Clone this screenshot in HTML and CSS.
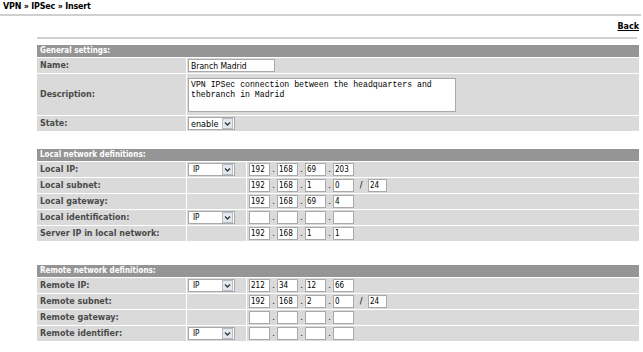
FILE: index.html
```html
<!DOCTYPE html>
<html>
<head>
  <title>VPN IPSec Insert</title>
  <link rel="stylesheet" href="styles.css">
</head>
<body>
  <div class="path">VPN &raquo; IPSec &raquo; Insert</div>
  <div class="content">
    <div class="back"><a href="#">Back</a></div>

    <table class="form general">
      <tr><th colspan="3">General settings:</th></tr>
      <tr>
        <td class="label">Name:</td>
        <td colspan="2" class="field"><input type="text" class="txt" value="Branch Madrid"></td>
      </tr>
      <tr class="tall">
        <td class="label">Description:</td>
        <td colspan="2" class="field"><textarea class="desc">VPN IPSec connection between the headquarters and thebranch in Madrid</textarea></td>
      </tr>
      <tr>
        <td class="label">State:</td>
        <td colspan="2" class="field">
          <span class="select"><select><option>enable</option></select><svg class="arrow" viewBox="0 0 11 11"><rect x="0.5" y="0.5" width="10" height="10" fill="#e3e7ee" stroke="#b6bcc6"/><path d="M3 4.5 L5.5 7 L8 4.5" fill="none" stroke="#333" stroke-width="1.3"/></svg></span>
        </td>
      </tr>
    </table>

    <table class="form local">
      <tr><th colspan="3">Local network definitions:</th></tr>
      <tr>
        <td class="label">Local IP:</td>
        <td class="type"><span class="select ip-type"><select><option>IP</option></select><svg class="arrow" viewBox="0 0 11 11"><rect x="0.5" y="0.5" width="10" height="10" fill="#e3e7ee" stroke="#b6bcc6"/><path d="M3 4.5 L5.5 7 L8 4.5" fill="none" stroke="#333" stroke-width="1.3"/></svg></span></td>
        <td class="addr">
          <input class="oct" value="192"><span class="dot">.</span><input class="oct" value="168"><span class="dot">.</span><input class="oct" value="69"><span class="dot">.</span><input class="oct" value="203">
        </td>
      </tr>
      <tr>
        <td class="label">Local subnet:</td>
        <td class="type"></td>
        <td class="addr">
          <input class="oct" value="192"><span class="dot">.</span><input class="oct" value="168"><span class="dot">.</span><input class="oct" value="1"><span class="dot">.</span><input class="oct" value="0"><span class="slash">/</span><input class="oct mask" value="24">
        </td>
      </tr>
      <tr>
        <td class="label">Local gateway:</td>
        <td class="type"></td>
        <td class="addr">
          <input class="oct" value="192"><span class="dot">.</span><input class="oct" value="168"><span class="dot">.</span><input class="oct" value="69"><span class="dot">.</span><input class="oct" value="4">
        </td>
      </tr>
      <tr>
        <td class="label">Local identification:</td>
        <td class="type"><span class="select ip-type"><select><option>IP</option></select><svg class="arrow" viewBox="0 0 11 11"><rect x="0.5" y="0.5" width="10" height="10" fill="#e3e7ee" stroke="#b6bcc6"/><path d="M3 4.5 L5.5 7 L8 4.5" fill="none" stroke="#333" stroke-width="1.3"/></svg></span></td>
        <td class="addr">
          <input class="oct"><span class="dot">.</span><input class="oct"><span class="dot">.</span><input class="oct"><span class="dot">.</span><input class="oct">
        </td>
      </tr>
      <tr>
        <td class="label">Server IP in local network:</td>
        <td class="type"></td>
        <td class="addr">
          <input class="oct" value="192"><span class="dot">.</span><input class="oct" value="168"><span class="dot">.</span><input class="oct" value="1"><span class="dot">.</span><input class="oct" value="1">
        </td>
      </tr>
    </table>

    <table class="form remote">
      <tr><th colspan="3">Remote network definitions:</th></tr>
      <tr>
        <td class="label">Remote IP:</td>
        <td class="type"><span class="select ip-type"><select><option>IP</option></select><svg class="arrow" viewBox="0 0 11 11"><rect x="0.5" y="0.5" width="10" height="10" fill="#e3e7ee" stroke="#b6bcc6"/><path d="M3 4.5 L5.5 7 L8 4.5" fill="none" stroke="#333" stroke-width="1.3"/></svg></span></td>
        <td class="addr">
          <input class="oct" value="212"><span class="dot">.</span><input class="oct" value="34"><span class="dot">.</span><input class="oct" value="12"><span class="dot">.</span><input class="oct" value="66">
        </td>
      </tr>
      <tr>
        <td class="label">Remote subnet:</td>
        <td class="type"></td>
        <td class="addr">
          <input class="oct" value="192"><span class="dot">.</span><input class="oct" value="168"><span class="dot">.</span><input class="oct" value="2"><span class="dot">.</span><input class="oct" value="0"><span class="slash">/</span><input class="oct mask" value="24">
        </td>
      </tr>
      <tr>
        <td class="label">Remote gateway:</td>
        <td class="type"></td>
        <td class="addr">
          <input class="oct"><span class="dot">.</span><input class="oct"><span class="dot">.</span><input class="oct"><span class="dot">.</span><input class="oct">
        </td>
      </tr>
      <tr>
        <td class="label">Remote identifier:</td>
        <td class="type"><span class="select ip-type"><select><option>IP</option></select><svg class="arrow" viewBox="0 0 11 11"><rect x="0.5" y="0.5" width="10" height="10" fill="#e3e7ee" stroke="#b6bcc6"/><path d="M3 4.5 L5.5 7 L8 4.5" fill="none" stroke="#333" stroke-width="1.3"/></svg></span></td>
        <td class="addr">
          <input class="oct"><span class="dot">.</span><input class="oct"><span class="dot">.</span><input class="oct"><span class="dot">.</span><input class="oct">
        </td>
      </tr>
    </table>
  </div>
</body>
</html>
```

FILE: styles.css
```css
body {
  margin: 0;
  font-family: "DejaVu Sans", Verdana, sans-serif;
  font-size: 8px;
  color: #000;
  background: #fff;
}

.path {
  font-weight: bold;
  line-height: 10px;
  letter-spacing: -0.2px;
  padding: 2px 3px 2px 3px;
  margin-right: 2px;
  border-bottom: 2px solid #d0d0d0;
}

.content {
  margin: 0 4px 0 37px;
}

.back {
  text-align: right;
  line-height: 12px;
  padding: 5px 0 4px 0;
  border-bottom: 2px solid #d0d0d0;
  margin-bottom: 6px;
  margin-right: 2px;
}

.back a {
  color: #000;
  font-weight: bold;
  margin-right: -2px;
}

.form {
  width: 100%;
  border-collapse: collapse;
}

.general {
  margin-bottom: 17px;
}

.local {
  margin-bottom: 23px;
}

.form th {
  background: #959595;
  color: #fff;
  text-align: left;
  font-family: "DejaVu Sans Condensed", "DejaVu Sans", sans-serif;
  font-stretch: condensed;
  font-weight: bold;
  height: 12px;
  line-height: 12px;
  padding: 0 3px;
  border-bottom: 1px solid #fff;
}

.form td {
  background: #dadada;
  border-bottom: 1px solid #fff;
  height: 15px;
  padding: 0;
}

.form tr.tall td {
  height: 41px;
}

.form td.label {
  width: 146px;
  padding-left: 3px;
  color: #4a4a4a;
  font-weight: bold;
  border-right: 1px solid #fff;
}

.form td.field {
  padding-left: 1px;
}

.form td.type {
  width: 58px;
  border-right: 1px solid #fff;
  padding-left: 1px;
}

.form td.addr {
  padding-left: 2px;
}

.txt {
  display: block;
  width: 87px;
  height: 13px;
  box-sizing: border-box;
  border: 1px solid #a9a9a9;
  font: 8.5px "DejaVu Sans Condensed", "DejaVu Sans", sans-serif;
  font-stretch: condensed;
  padding: 0 2px;
}

.desc {
  display: block;
  margin: 4px 0 3px 0;
  width: 268px;
  height: 34px;
  box-sizing: border-box;
  border: 1px solid #a9a9a9;
  font: 8.2px/10px "Liberation Mono", monospace;
  padding: 1px 2px;
  resize: none;
  overflow: hidden;
}

.select {
  position: relative;
  display: inline-block;
  vertical-align: middle;
}

.select select {
  appearance: none;
  -webkit-appearance: none;
  display: block;
  width: 47px;
  height: 13px;
  box-sizing: border-box;
  border: 1px solid #a9a9a9;
  background: #fff;
  font: 9px "DejaVu Sans Condensed", "DejaVu Sans", sans-serif;
  font-stretch: condensed;
  padding: 0 0 0 2px;
  margin: 0;
  color: #000;
}

.ip-type select {
  font-size: 8px;
  padding-left: 4px;
}

.arrow {
  position: absolute;
  right: 2px;
  top: 1px;
  width: 11px;
  height: 11px;
}

.oct {
  width: 21px;
  height: 13px;
  box-sizing: border-box;
  border: 1px solid #a9a9a9;
  font: 8px "DejaVu Sans Condensed", "DejaVu Sans", sans-serif;
  font-stretch: condensed;
  padding: 0 1px;
  margin: 0;
  vertical-align: middle;
}

.dot {
  display: inline-block;
  width: 7px;
  text-align: center;
  vertical-align: middle;
}

.slash {
  display: inline-block;
  width: 14px;
  text-align: center;
  vertical-align: middle;
}

.mask {
  width: 19px;
}
```
